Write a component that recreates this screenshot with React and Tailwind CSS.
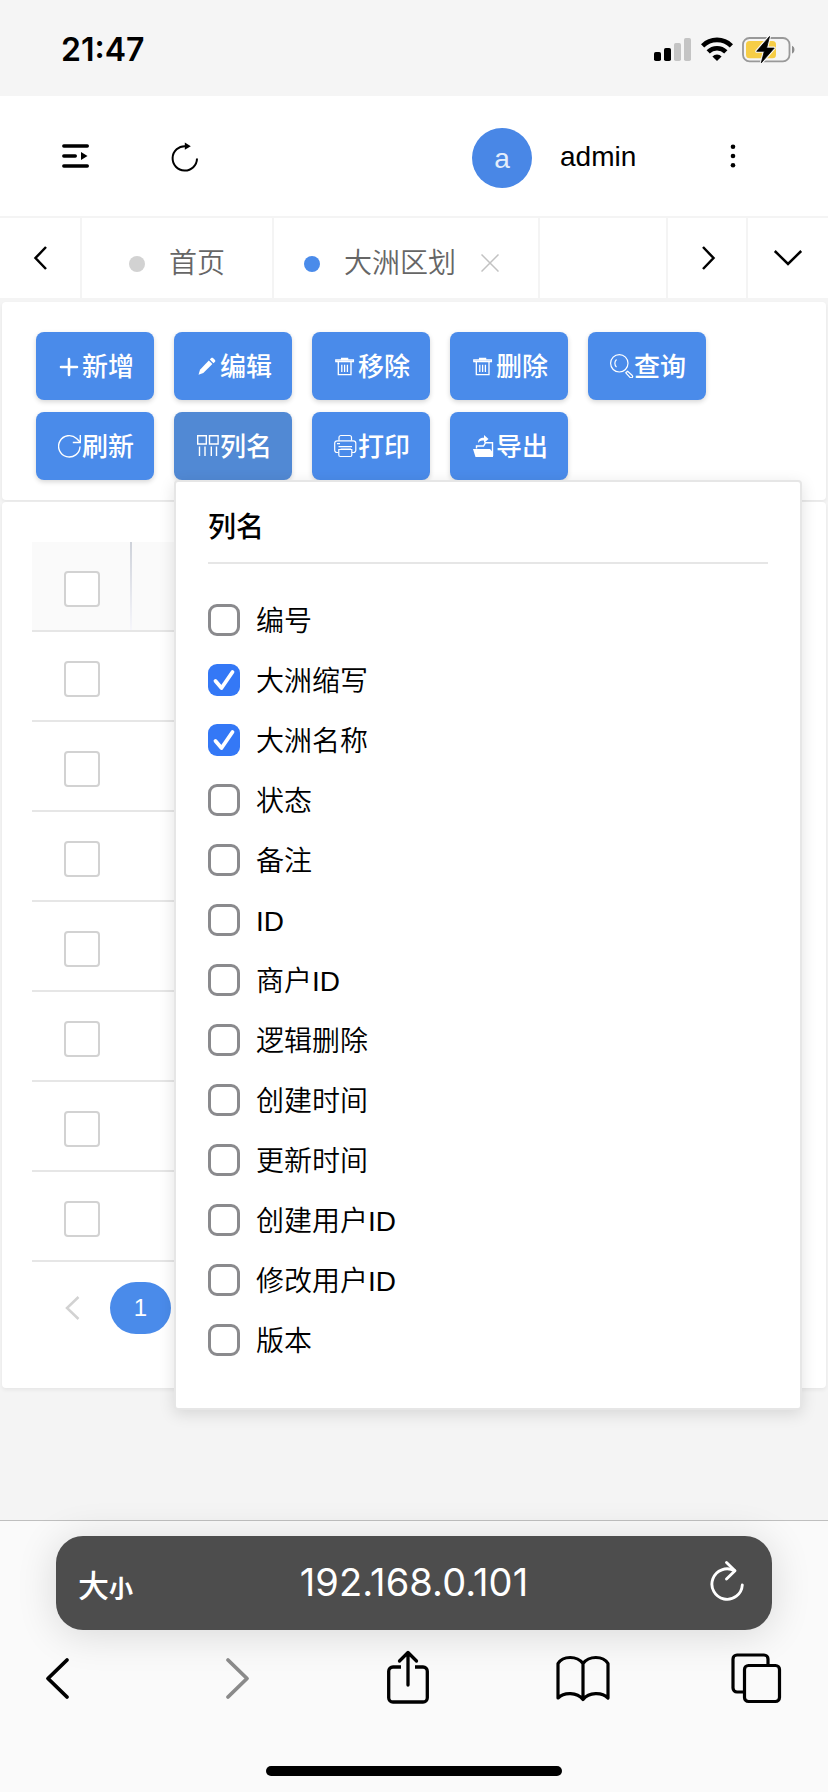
import React, { useState } from 'react';

const buttons = [
  { label: '新增', icon: 'add' },
  { label: '编辑', icon: 'edit' },
  { label: '移除', icon: 'trash' },
  { label: '删除', icon: 'trash' },
  { label: '查询', icon: 'search' },
  { label: '刷新', icon: 'refresh' },
  { label: '列名', icon: 'columns' },
  { label: '打印', icon: 'print' },
  { label: '导出', icon: 'export' },
];

const initialColumns = [
  { name: '编号', checked: false },
  { name: '大洲缩写', checked: true },
  { name: '大洲名称', checked: true },
  { name: '状态', checked: false },
  { name: '备注', checked: false },
  { name: 'ID', checked: false },
  { name: '商户ID', checked: false },
  { name: '逻辑删除', checked: false },
  { name: '创建时间', checked: false },
  { name: '更新时间', checked: false },
  { name: '创建用户ID', checked: false },
  { name: '修改用户ID', checked: false },
  { name: '版本', checked: false },
];

const rows = [1, 2, 3, 4, 5, 6, 7];

// 24x24 toolbar icons
const ButtonIcon = ({ name }) => {
  switch (name) {
    case 'add':
      return (
        <svg className="w-6 h-6 shrink-0" viewBox="0 0 24 24" fill="none" stroke="currentColor" strokeWidth="2.6" strokeLinecap="round">
          <path d="M11 5v16M3 13h16" />
        </svg>
      );
    case 'edit':
      return (
        <svg className="w-6 h-6 shrink-0" viewBox="0 0 24 24" fill="currentColor">
          <path d="M2.500 20.800l1.500-5L12.800 6.500l3.600 3.600L7.300 19z" />
          <path d="M13.800 5.500l1.400-1.400c.6-.6 1.200-.6 1.800 0l2 2c.5.6.5 1.200 0 1.700L17.500 9.200z" />
        </svg>
      );
    case 'trash':
      return (
        <svg className="w-6 h-6 shrink-0" viewBox="0 0 24 24" fill="none" stroke="currentColor" strokeWidth="1.3">
          <path d="M1.800 6h17.600v1.700H1.800zM4.300 8v12.700h12.700V8M7.800 10.800v7.200M10.600 10.800v7.200M13.400 10.800v7.200" />
          <path d="M7.600 5.700V4.300h6v1.400z" fill="currentColor" />
        </svg>
      );
    case 'search':
      return (
        <svg className="w-6 h-6 shrink-0" viewBox="0 0 24 24" fill="none" stroke="currentColor" strokeWidth="1.2">
          <circle cx="9.300" cy="9.300" r="8.700" />
          <path d="M6.500 5.500a5.200 5.200 0 0 0 0 7.600M15.800 18.800l1.800-1.600 4.700 4.300a1.500 1.500 0 0 1-2.100 2.100z" strokeLinejoin="round" />
        </svg>
      );
    case 'refresh':
      return (
        <svg className="w-6 h-6 shrink-0" viewBox="0 0 24 24" fill="none" stroke="currentColor" strokeWidth="1.400">
          <path d="M22 12.500A10.700 10.700 0 1 1 18.600 4.500L22 8" />
          <path d="M22.300 1v7.500h-7.500" />
        </svg>
      );
    case 'columns':
      return (
        <svg className="w-6 h-6 shrink-0" viewBox="0 0 24 24" fill="none" stroke="currentColor" strokeWidth="1.400">
          <path d="M1.700 1.700h8.600v8.300H1.700zM13.500 1.700h8.600v8.300h-8.600zM3.500 12.500v9.500M9 12.500v9.500M15.300 12.500v9.500M20.500 12.500v9.500" />
        </svg>
      );
    case 'print':
      return (
        <svg className="w-6 h-6 shrink-0" viewBox="0 0 24 24" fill="none" stroke="currentColor" strokeWidth="1.200">
          <path d="M5 6.500V3.500a2 2 0 0 1 2-2h8.500a2 2 0 0 1 2 2v3" />
          <path d="M4.500 18.500H3A2.300 2.300 0 0 1 .7 16V9.300A2.500 2.500 0 0 1 3.200 6.800h16.100a2.500 2.500 0 0 1 2.500 2.500V16a2.300 2.300 0 0 1-2.300 2.500H18M3 9.700h3" />
          <path d="M4.500 12.700h13.500M6.500 15h10.500M4.800 15.500v5.500a1.500 1.500 0 0 0 1.500 1.500h10a1.500 1.500 0 0 0 1.500-1.500v-5.500z" />
        </svg>
      );
    case 'export':
      return (
        <svg className="w-6 h-6 shrink-0" viewBox="0 0 24 24" fill="currentColor">
          <path d="M1 15h17l3 3.500v4.500H3.500z" />
          <path d="M4.500 14.500V12h7l2-3.200h7V22" fill="none" stroke="currentColor" strokeWidth="1.400" />
          <path d="M6 9c0-3.800 2-5.300 6-5.300V1l4.500 4-4.500 4V6.500C9 6.500 7.500 7 6 9z" />
        </svg>
      );
    default:
      return null;
  }
};

const StatusBar = () => (
  <div className="h-24 shrink-0 bg-[#f5f5f5] flex items-start justify-between pl-[61px] pr-[32px]">
    <span className="mt-[30px] font-['Inter'] font-semibold text-[32px] leading-10 text-black">21:47</span>
    <div className="mt-9 flex items-center gap-[9px]">
      <svg className="w-[38px] h-7" viewBox="0 0 38 28">
        <rect x="0" y="16" width="7" height="9" rx="1.800" />
        <rect x="10" y="12" width="7" height="13" rx="1.800" />
        <rect x="20" y="7" width="7" height="18" rx="1.800" fill="#c4c4c4" />
        <rect x="30" y="2" width="7" height="23" rx="1.800" fill="#c4c4c4" />
      </svg>
      <svg className="w-8 h-7" viewBox="0 0 32 28" fill="none" stroke="#000" strokeWidth="4.600">
        <path d="M1.600 9.800a20.500 20.500 0 0 1 28.800 0" />
        <path d="M7.200 15.800a12.600 12.600 0 0 1 17.600 0" />
        <path d="M16 25l-4.600-4.600a6.700 6.700 0 0 1 9.200 0z" fill="#000" stroke="none" />
      </svg>
      <svg className="w-[54px] h-7" viewBox="0 0 54 28">
        <rect x="1" y="2" width="46.500" height="23.300" rx="6.500" fill="none" stroke="#999" strokeWidth="1.800" />
        <rect x="4" y="5" width="30" height="17.300" rx="3.500" fill="#f6cd46" />
        <path d="M50 9.800c3.300 1.200 3.300 6.600 0 7.800z" fill="#8c8c8c" />
        <path d="M27.500 0.500L14.700 15.300h7.600l-3 11.500L32.200 12.100h-7.600z" stroke="#f5f5f5" strokeWidth="3" strokeLinejoin="round" />
        <path d="M27.500 0.500L14.700 15.300h7.600l-3 11.500L32.200 12.100h-7.600z" stroke="#000" strokeWidth="0.800" strokeLinejoin="round" />
      </svg>
    </div>
  </div>
);

const Header = () => (
  <div className="h-[122px] shrink-0 bg-white border-b-2 border-[#f4f4f4] flex items-center text-black">
    <svg className="ml-[61px] w-7 h-7" viewBox="0 0 28 28" fill="none" stroke="#000" strokeWidth="3.400" strokeLinecap="round">
      <path d="M2.800 4h23.500M2.800 14h11.500M2.800 24h23.500" />
      <path d="M20 10v8l6.500-4z" fill="#000" stroke="none" />
    </svg>
    <svg className="ml-[82px] mt-px w-7 h-[30px]" viewBox="0 0 28 30" fill="none" stroke="#000" strokeWidth="2">
      <path d="M26 16.500A12.200 12.200 0 1 1 14.500 4.200" />
      <path d="M13.800 0.600v7.200l6-3.500z" fill="#000" stroke="none" />
    </svg>
    <div className="ml-[273px] mt-1 w-[60px] h-[60px] rounded-full bg-[#4987e6] flex items-center justify-center">
      <span className="mt-0.5 font-['Liberation_Sans'] text-[28px] leading-none text-[#e3edfb]">a</span>
    </div>
    <span className="ml-[28px] mt-0.5 w-[78px] font-['Liberation_Sans'] text-[28px] leading-8">admin</span>
    <svg className="ml-[91px] w-2 h-7" viewBox="0 0 8 28">
      <circle cx="4" cy="4.700" r="2.300" />
      <circle cx="4" cy="14" r="2.300" />
      <circle cx="4" cy="23.300" r="2.300" />
    </svg>
  </div>
);

const Tabs = () => (
  <div className="h-[84px] shrink-0 bg-white border-b-4 border-[#f4f4f4] flex font-['Noto_Sans_CJK_SC',sans-serif] font-[350] text-[28px] leading-10 text-[#666]">
    <div className="w-[82px] border-r-2 border-[#f4f4f4] pl-[33px] pt-7">
      <svg className="w-[15px] h-6" viewBox="0 0 15 24" fill="none" stroke="#000" strokeWidth="2.500">
        <path d="M13 1L2.500 12 13 23" />
      </svg>
    </div>
    <div className="w-[192px] border-r-2 border-[#f4f4f4] flex items-center pl-[47px] pt-[6px]">
      <span className="w-4 h-4 mt-[5px] rounded-full bg-[#d2d2d2]" />
      <span className="ml-6">首页</span>
    </div>
    <div className="w-[266px] border-r-2 border-[#f4f4f4] flex items-center pl-[30px] pt-[6px]">
      <span className="w-4 h-4 mt-[5px] rounded-full bg-[#4a8bea]" />
      <span className="ml-6">大洲区划</span>
      <svg className="ml-[25px] mt-1 w-[18px] h-[18px]" viewBox="0 0 18 18" fill="none" stroke="#c2c2c2" strokeWidth="1.500">
        <path d="M.5.5l17 17M17.500.5l-17 17" />
      </svg>
    </div>
    <div className="w-[128px] border-r-2 border-[#f4f4f4]" />
    <div className="w-20 border-r-2 border-[#f4f4f4] pl-[33px] pt-7">
      <svg className="w-[15px] h-6" viewBox="0 0 15 24" fill="none" stroke="#000" strokeWidth="2.500">
        <path d="M2 1l10.500 11L2 23" />
      </svg>
    </div>
    <div className="flex-1 pl-[25px] pt-8">
      <svg className="w-[30px] h-4" viewBox="0 0 30 16" fill="none" stroke="#000" strokeWidth="2.500">
        <path d="M1.800 1L15 14 28.200 1" />
      </svg>
    </div>
  </div>
);

const ColumnPanel = () => {
  const [columns, setColumns] = useState(initialColumns);

  const toggle = (name) => {
    setColumns(columns.map((c) => (c.name === name ? { ...c, checked: !c.checked } : c)));
  };

  return (
    <div className="absolute left-[172px] top-[178px] z-10 w-[628px] h-[930px] bg-white border-2 border-[#e6e6e6] rounded-[4px] shadow-[0_4px_16px_rgba(0,0,0,0.12)] px-8 text-black">
      <h3 className="h-[82px] border-b-2 border-[#e6e6e6] pt-[26px] text-[28px] leading-10 font-medium">列名</h3>
      <ul className="pt-[26px]">
        {columns.map((col) => (
          <li key={col.name} onClick={() => toggle(col.name)} className="h-[60px] flex items-center">
            {col.checked ? (
              <span className="w-8 h-8 rounded-[9px] bg-[#3478f6]">
                <svg className="w-8 h-8" viewBox="0 0 32 32" fill="none" stroke="#fff" strokeWidth="3.800" strokeLinecap="round" strokeLinejoin="round">
                  <path d="M7.500 17l6 7L24.500 8" />
                </svg>
              </span>
            ) : (
              <span className="w-8 h-8 rounded-[9px] border-3 border-[#8a8a8d]" />
            )}
            <span className="ml-4 mt-1 font-[350] text-[28px] leading-10">{col.name}</span>
          </li>
        ))}
      </ul>
    </div>
  );
};

const Checkbox = () => <span className="block w-9 h-9 bg-white border-2 border-[#d2d2d2] rounded-[4px]" />;

const BrowserBar = () => (
  <div className="relative h-[272px] shrink-0 bg-[#fafafa] border-t border-[#bfbfbf]">
    <div className="mx-14 mt-[15px] h-[94px] rounded-[27px] bg-[#4d4d4d] shadow-[0_4px_40px_rgba(0,0,0,0.14)] flex items-center justify-between pl-[22px] pr-[27px] text-white">
      <div className="w-[60px] flex items-baseline font-['Noto_Sans_CJK_SC',sans-serif] font-medium leading-none">
        <span className="text-[31px]">大</span>
        <span className="text-[24px] font-bold">小</span>
      </div>
      <span className="-mt-0.5 ml-[5px] font-['Inter'] text-[38px] leading-none tracking-[0.1px]">192.168.0.101</span>
      <div className="w-[60px] flex justify-end">
        <svg className="-mt-1 w-9 h-[42px]" viewBox="0 0 36 42" fill="none" stroke="#fff" strokeWidth="2.900" strokeLinecap="round" strokeLinejoin="round">
          <path d="M33.300 25A15.200 15.200 0 1 1 25.500 10.800" />
          <path d="M17.500 2.500l8.500 8.300-8.500 8.200" />
        </svg>
      </div>
    </div>
    <div className="mt-[18px] h-[60px] flex items-center pl-[44px]">
      <svg className="w-[26px] h-11" viewBox="0 0 26 44" fill="none" stroke="#000" strokeWidth="3.800" strokeLinecap="round" strokeLinejoin="round">
        <path d="M23 4L4 22.500 23 41" />
      </svg>
      <svg className="ml-[155px] w-[26px] h-11" viewBox="0 0 26 44" fill="none" stroke="#8a8a8a" strokeWidth="3.800" strokeLinecap="round" strokeLinejoin="round">
        <path d="M3 4l19 18.500L3 41" />
      </svg>
      <svg className="ml-[135px] -mt-0.5 w-11 h-14" viewBox="0 0 44 56" fill="none" stroke="#000" strokeWidth="3.300" strokeLinecap="round" strokeLinejoin="round">
        <path d="M15 18H7a4.300 4.300 0 0 0-4.300 4.300v26.400A4.300 4.300 0 0 0 7 53h30a4.300 4.300 0 0 0 4.300-4.300V22.300A4.300 4.300 0 0 0 37 18h-8" strokeLinecap="butt" />
        <path d="M22 36V4M13.500 12L22 3.500l8.500 8.500" />
      </svg>
      <svg className="ml-[125px] w-14 h-12" viewBox="0 0 56 48" fill="none" stroke="#000" strokeWidth="3.200" strokeLinejoin="round">
        <path d="M28 9.500C22 1.500 8 1.500 3 9.500v34.500c6-6 19-6 25 1.500 6-7.500 19-7.500 25-1.500V9.500C48 1.500 34 1.500 28 9.500zM28 9.500v36" />
      </svg>
      <svg className="ml-[119px] w-[52px] h-[52px]" viewBox="0 0 52 52" fill="none" stroke="#000" strokeWidth="3.200">
        <path d="M38 13V7a4 4 0 0 0-4-4H7a4 4 0 0 0-4 4v29a4 4 0 0 0 4 4h6" />
        <rect x="14.500" y="13.500" width="35" height="36" rx="4" />
      </svg>
    </div>
    <div className="mx-auto mt-[58px] w-[296px] h-2.5 rounded-full bg-black" />
  </div>
);

const App = () => {
  return (
    <div className="w-[828px] h-[1792px] overflow-hidden flex flex-col bg-[#f4f4f4]">
      <StatusBar />
      <Header />
      <Tabs />

      <div className="relative flex-1 mx-0.5 font-['Liberation_Sans','Noto_Sans_CJK_SC',sans-serif]">
        {/* Toolbar */}
        <div className="h-[198px] bg-white rounded-[4px] shadow-[0_2px_4px_rgba(0,0,0,0.06)] pl-[34px] pt-[30px] flex flex-wrap content-start gap-x-5 gap-y-3">
          {buttons.map((btn) => (
            <button
              key={btn.label}
              className={`w-[118px] h-[68px] rounded-[8px] shadow-[0_2px_5px_rgba(0,0,0,0.16)] flex items-center justify-center pl-0.5 text-white text-[26px] leading-10 font-medium ${btn.icon === 'columns' ? 'bg-[#5189d4]' : 'bg-[#4a8bea]'
                }`}
            >
              <ButtonIcon name={btn.icon} />
              <span className="mt-0.5">{btn.label}</span>
            </button>
          ))}
        </div>

        {/* Table */}
        <div className="mt-0.5 h-[886px] bg-white rounded-[4px] shadow-[0_2px_4px_rgba(0,0,0,0.06)] px-[30px] pt-10">
          <div className="h-[90px] bg-[#fafafa] border-b-2 border-[#e6e6e6] flex">
            <div className="w-[98px] pl-8 pt-[29px]">
              <Checkbox />
            </div>
            <div className="w-0.5 bg-linear-to-b from-[#ced2da] to-[#f6f6fb]" />
          </div>
          {rows.map((row) => (
            <div key={row} className="h-[90px] border-b-2 border-[#e6e6e6] pl-8 pt-[29px]">
              <Checkbox />
            </div>
          ))}
          <div className="pt-5 pl-8 flex items-center">
            <svg className="w-4 h-6" viewBox="0 0 16 24" fill="none" stroke="#d2d2d2" strokeWidth="2.500">
              <path d="M14.500 1L3 12l11.500 11" />
            </svg>
            <span className="ml-[30px] w-[61px] h-[52px] rounded-[26px] bg-[#4a8bea] text-white text-2xl flex items-center justify-center">1</span>
          </div>
        </div>

        <ColumnPanel />
      </div>

      <BrowserBar />
    </div>
  );
};

export default App;
